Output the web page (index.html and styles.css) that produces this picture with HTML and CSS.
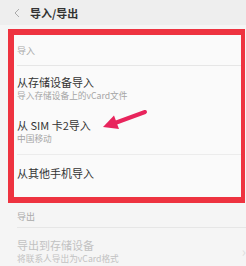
FILE: index.html
```html
<!DOCTYPE html>
<html>
<head>
    <title>导入/导出</title>
    <link rel="stylesheet" href="styles.css">
</head>
<body>
    <div class="header">
        <svg class="back" width="6" height="10" viewBox="0 0 6 10">
            <polyline points="5,1 1,5 5,9" fill="none" stroke="#aaa" stroke-width="1"/>
        </svg>
        <span class="title">导入/导出</span>
    </div>

    <div class="marked">
        <div class="label">导入</div>
        <div class="item first">
            <div class="item-title">从存储设备导入</div>
            <div class="item-sub">导入存储设备上的vCard文件</div>
        </div>
        <div class="item">
            <div class="item-title">从 SIM 卡2导入</div>
            <div class="item-sub">中国移动</div>
        </div>
        <div class="item last">
            <div class="item-title">从其他手机导入</div>
        </div>
        <svg class="arrow" width="60" height="30" viewBox="0 0 60 30">
            <line x1="50" y1="5" x2="20" y2="16" stroke="#e8245c" stroke-width="4" stroke-linecap="round"/>
            <polygon points="8,20 19,8.5 24,22" fill="#e8245c"/>
        </svg>
    </div>

    <div class="plain">
        <div class="label">导出</div>
        <div class="item disabled">
            <div class="item-title">导出到存储设备</div>
            <div class="item-sub">将联系人导出为vCard格式</div>
            <span class="chevron">›</span>
        </div>
    </div>
</body>
</html>
```

FILE: styles.css
```css
body {
    font-family: "Noto Sans CJK SC", "Noto Sans", sans-serif;
    background-color: #f5f5f5;
    margin: 0;
    padding: 0;
    width: 246px;
    height: 266px;
    overflow: hidden;
}

.header {
    height: 25px;
    background-color: #eeeeee;
    display: flex;
    align-items: center;
    margin-bottom: 4px;
}

.back {
    margin-left: 14px;
    margin-right: 10px;
}

.title {
    color: #333;
    font-size: 11px;
    font-weight: bold;
}

.marked {
    position: relative;
    margin: 0 1px 0 8px;
    border-style: solid;
    border-color: #ee3340;
    border-width: 6px 4px 6px 6px;
    background-color: #fafafa;
    padding-left: 3px;
}

.plain {
    padding-left: 17px;
}

.label {
    height: 31px;
    display: flex;
    align-items: center;
    font-size: 9px;
    color: #aaa;
    border-bottom: 1px solid #e6e6e6;
    box-sizing: border-box;
}

.item {
    position: relative;
    height: 46px;
    box-sizing: border-box;
    padding-top: 8px;
    border-bottom: 1px solid #ececec;
}

.item.first {
    height: 43px;
    border-bottom: none;
}

.item.last {
    height: 42px;
    padding-top: 10px;
    border-bottom: none;
}

.item-title {
    font-size: 11px;
    line-height: 16px;
    color: #333;
}

.item-sub {
    font-size: 8.7px;
    line-height: 12px;
    color: #a5a5a5;
}

.plain .label {
    height: 25px;
    padding-top: 3px;
}

.plain .item {
    height: 38px;
    padding-top: 10px;
    border-bottom: none;
}

.plain .item-title {
    line-height: 15px;
}

.plain .item-sub {
    line-height: 11px;
}

.disabled .item-title,
.disabled .item-sub {
    color: #c2c2c2;
}

.chevron {
    position: absolute;
    right: 0;
    top: 13px;
    color: #ddd;
    font-size: 14px;
}

.arrow {
    position: absolute;
    left: 81px;
    top: 72px;
}
```
